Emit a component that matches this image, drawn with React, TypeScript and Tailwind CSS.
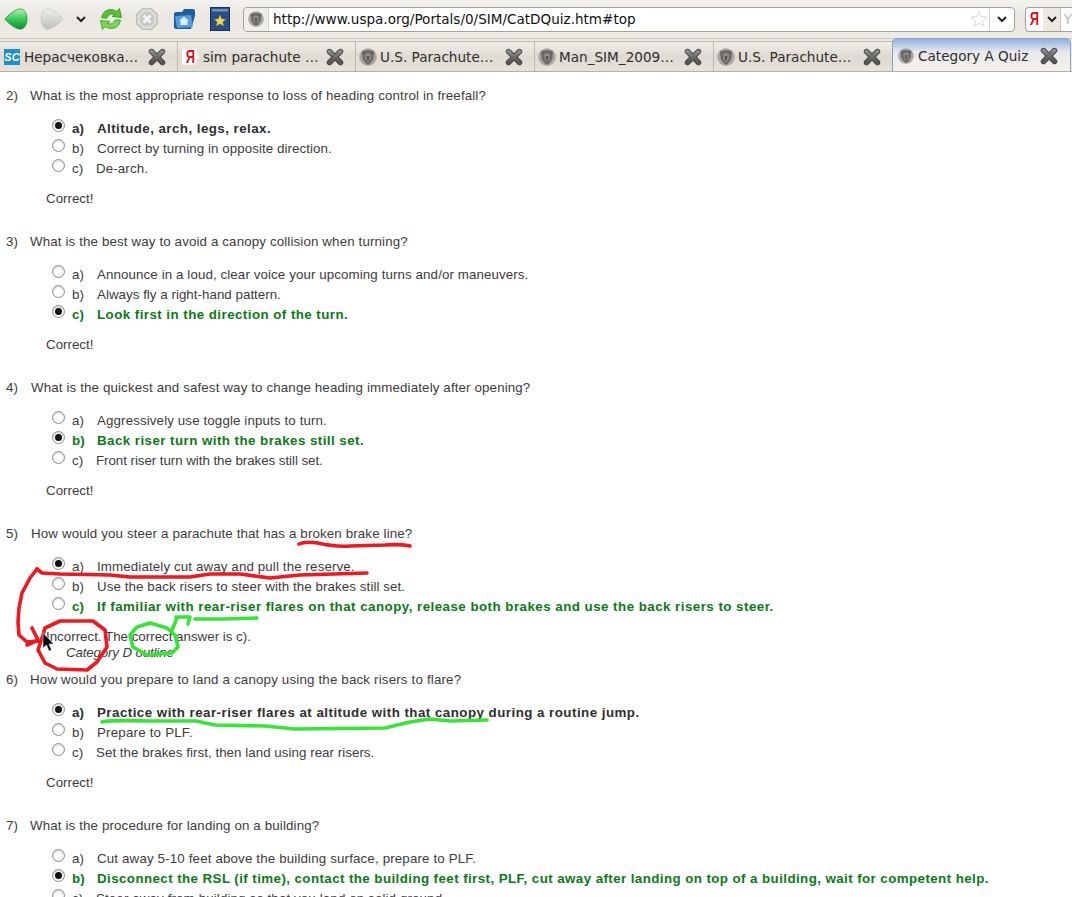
import React from "react";

const Fav = ({ big }: { big?: boolean }) => (
  <svg viewBox="0 0 16 16" className={big ? "w-[18px] h-[18px] -mx-[1px] shrink-0" : "w-[16px] h-[16px] shrink-0"}>
    <circle cx="8" cy="8" r="7.8" fill="#aaa6a2" />
    <path d="M2.6 3.2 Q8 .6 13.4 3.2 L12.8 9.2 Q11.2 13.4 8 15 Q4.8 13.4 3.2 9.2 Z" fill="#6b6866" />
    <path d="M5.2 5.8 L8 4.2 L10.8 5.8 L10.2 10.2 L8 12.6 L5.8 10.2 Z" fill="#8f8c88" />
    <path d="M6.9 7 L9.1 7 L8.7 11 L7.3 11 Z" fill="#565351" />
  </svg>
);

const CloseX = () => (
  <svg width="18" height="18" viewBox="0 0 18 18" className="shrink-0">
    <defs>
      <linearGradient id="xg" x1="0" y1="0" x2="0" y2="1">
        <stop offset="0" stopColor="#8d8d8d" />
        <stop offset="0.5" stopColor="#6a6a6a" />
        <stop offset="1" stopColor="#565656" />
      </linearGradient>
    </defs>
    <path d="M3.5 3.5 L14.5 14.5 M14.5 3.5 L3.5 14.5" stroke="#3f3f3f" strokeWidth="5.4" strokeLinecap="round" />
    <path d="M3.5 3.5 L14.5 14.5 M14.5 3.5 L3.5 14.5" stroke="url(#xg)" strokeWidth="3.8" strokeLinecap="round" />
  </svg>
);

const Tab = ({ icon, label, active, w }: { icon: React.ReactNode; label: string; active?: boolean; w: string }) => (
  <div
    className={
      active
        ? `${w} -ml-[1px] h-[33px] -mt-[3px] shrink-0 flex items-center pl-[5px] pr-[12px] pt-[1px] gap-[4px] rounded-t-[5px] border border-b-0 border-[#8ea2bd] bg-gradient-to-b from-[#8fb0e4] via-[#e9e9ea] via-40% to-[#f4f2ee]`
        : `${w} h-[30px] shrink-0 flex items-center pl-[4px] pr-[11px] gap-[4px] border-r border-t border-[#bdb8ae] bg-gradient-to-b from-[#f1eee9] via-[#dfdbd3] to-[#e6e2da]`
    }
  >
    {icon}
    <span className="flex-1 pt-[2px] whitespace-nowrap text-[13.6px] text-[#2e2e2e] font-['DejaVu_Sans',sans-serif] overflow-hidden">{label}</span>
    <CloseX />
  </div>
);

const Radio = ({ on }: { on?: boolean }) => (
  <span className="w-[13px] h-[13px] rounded-full border border-[#8b8b8b] bg-white flex items-center justify-center shrink-0 -mt-[7px] shadow-[inset_0_1px_2px_#c8c8c8]">
    {on && <span className="w-[7px] h-[7px] rounded-full bg-[#111]" />}
  </span>
);

type Opt = { l: string; t: string; on?: boolean; good?: boolean; bold?: boolean; tr?: string };

const Option = ({ l, t, on, good, bold, tr }: Opt) => {
  const b = good || bold;
  const color = good ? "text-[#0b7a16]" : bold ? "text-[#2e2e2e]" : "text-[#3c3c3c]";
  const sp = tr ?? (b ? "tracking-[0.45px]" : "tracking-[0.12px]");
  const wid = l === "c" && !b ? "w-[24px]" : "w-[25px]";
  return (
    <div className={`h-[20px] flex items-center pl-[52px] ${color}`}>
      <Radio on={on} />
      <span className={`ml-[7px] shrink-0 ${wid} ${b ? "font-bold" : ""}`}>{l})</span>
      <span className={`whitespace-nowrap ${sp} ${b ? "font-bold" : ""}`}>{t}</span>
    </div>
  );
};

const Question = ({
  n,
  q,
  opts,
  x,
  wrong,
  tq,
}: {
  n: number;
  q: string;
  opts: Opt[];
  x?: boolean;
  wrong?: boolean;
  tq?: string;
}) => (
  <section>
    <div className="h-[20px] flex items-center pl-[6px] text-[#3c3c3c]">
      <span className={x ? "w-[25px]" : "w-[24px]"}>{n})</span>
      <span className={`whitespace-nowrap ${tq ?? "tracking-[0.13px]"}`}>{q}</span>
    </div>
    <div className="mt-[13px]">
      {opts.map((o) => (
        <Option key={o.l} {...o} />
      ))}
    </div>
    {wrong ? (
      <>
        <div className="mt-[10px] h-[20px] flex items-center pl-[46px] text-[#3c3c3c]">Incorrect. The correct answer is c).</div>
        <div className="-mt-[2px] mb-[9px] h-[16px] flex items-center pl-[66px] italic tracking-[-0.15px] text-[#3c3c3c]">Category D outline</div>
      </>
    ) : (
      <div className="mt-[10px] mb-[23px] h-[20px] flex items-center pl-[46px] text-[#3c3c3c]">Correct!</div>
    )}
  </section>
);

const Annotations = () => (
  <svg className="absolute left-0 top-0 pointer-events-none" width="1072" height="897" viewBox="0 0 1072 897" fill="none" strokeLinecap="round" strokeLinejoin="round">
    <g stroke="#f2161e" strokeWidth="3.6" className="blur-[0.4px]">
      <path d="M299 544 Q305 541 318 543 Q335 547 350 546 L385 545 Q400 544 410 546" />
      <path d="M37 569 L42 573 L60 574 L110 575 L130 577 L190 577 L210 574 L240 574 L270 578 L300 575 L367 573" />
      <path d="M37 569 L30 578 L22 593 L19 608 L18 622 L19 635 L27 642 L40 641" />
      <path d="M32 628 L38 640 L27 645" />
      <path d="M45 628 L60 621 L93 621 L105 630 L107 647 L97 662 L87 670 L57 669 L45 663 L38 650 L43 635 L45 628" />
    </g>
    <g stroke="#36e636" strokeWidth="3.6" className="blur-[0.4px]">
      <path d="M130 635 L137 627 L150 623 L167 628 L175 635 L178 647 L172 653 L147 655 L133 647 L130 635" />
      <path d="M172 630 L177 618 M176 617 L190 617 L188 624" />
      <path d="M195 619 L225 619 L257 618" />
      <path d="M102 722 Q110 720 150 721 L196 721 L215 725 L265 726 L295 729 L385 728 L410 722 L430 719 L450 721 L487 720" />
    </g>
    <path d="M43 633 L43 648 L46.5 645 L49 651 L51.5 650 L49 644 L53.5 644 Z" fill="#0c0c14" stroke="#d8d8e0" strokeWidth="0.6" />
  </svg>
);

const Chevron = () => (
  <svg width="12" height="8" viewBox="0 0 12 8" className="shrink-0">
    <path d="M2 2 L6 6 L10 2" stroke="#222" strokeWidth="2" fill="none" />
  </svg>
);

const Ya = () => (
  <span className="w-[17px] h-[16px] shrink-0 flex items-center justify-center bg-white [clip-path:polygon(0_0,75%_0,100%_50%,75%_100%,0_100%)]">
    <span className="inline-block scale-x-[0.72] text-[18px] leading-none font-bold text-[#e01010] font-['Liberation_Sans',sans-serif]">Я</span>
  </span>
);

export default function App() {
  return (
    <div className="relative w-[1072px] h-[897px] overflow-hidden bg-white font-['Liberation_Sans',Arial,sans-serif] text-[13.33px]">
      {/* toolbar */}
      <div className="h-[39px] flex items-center bg-gradient-to-b from-[#f4f2ee] via-[#eae7e1] to-[#efece6] border-b border-[#cfcac0]">
        <svg width="24" height="24" viewBox="0 0 24 24" className="ml-[4px] shrink-0">
          <defs>
            <linearGradient id="bk" x1="0" y1="0" x2="0" y2="1">
              <stop offset="0" stopColor="#b4f0ba" />
              <stop offset="0.55" stopColor="#2fc64e" />
              <stop offset="1" stopColor="#17883a" />
            </linearGradient>
          </defs>
          <path d="M1 12 C3 9 10 3 15 2 C20 1 23 6 23 12 C23 18 20 23 15 22 C10 21 3 15 1 12 Z" fill="url(#bk)" stroke="#1f8a3f" strokeWidth="0.7" />
        </svg>
        <svg width="24" height="24" viewBox="0 0 24 24" className="ml-[12px] shrink-0">
          <defs>
            <linearGradient id="fw" x1="0" y1="0" x2="0" y2="1">
              <stop offset="0" stopColor="#efefeb" />
              <stop offset="1" stopColor="#bfbfb8" />
            </linearGradient>
          </defs>
          <path d="M23 12 C21 9 14 3 9 2 C4 1 1 6 1 12 C1 18 4 23 9 22 C14 21 21 15 23 12 Z" fill="url(#fw)" stroke="#c4c4bc" strokeWidth="0.7" />
        </svg>
        <div className="ml-[11px]">
          <Chevron />
        </div>
        <svg width="24" height="24" viewBox="0 0 24 24" className="ml-[12px] shrink-0">
          <circle cx="12" cy="12" r="10.5" fill="#e8f6df" />
          <path d="M2.5 11 Q4 2.5 12 2.5 Q15 2.5 17.5 4.5 L20.5 1.5 L22.5 10.5 L13 9.5 L15.5 7.5 Q10 5.5 8 11 Z" fill="#56c232" stroke="#3a8f25" strokeWidth="0.8" />
          <path d="M21.5 13 Q20 21.5 12 21.5 Q9 21.5 6.5 19.5 L3.5 22.5 L1.5 13.5 L11 14.5 L8.5 16.5 Q14 18.5 16 13 Z" fill="#7ed453" stroke="#3a8f25" strokeWidth="0.8" />
        </svg>
        <svg width="22" height="22" viewBox="0 0 22 22" className="ml-[13px] shrink-0">
          <path d="M6.5 .8 L15.5 .8 L21.2 6.5 L21.2 15.5 L15.5 21.2 L6.5 21.2 L.8 15.5 L.8 6.5 Z" fill="#dededa" stroke="#b4b4ae" strokeWidth="1.1" strokeLinejoin="round" />
          <circle cx="11" cy="11" r="7.6" fill="#c8c8c4" />
          <path d="M7.5 7.5 L14.5 14.5 M14.5 7.5 L7.5 14.5" stroke="#f4f4f2" strokeWidth="2.8" />
        </svg>
        <svg width="24" height="22" viewBox="0 0 24 22" className="ml-[14px] shrink-0">
          <path d="M2 6 L2 19 Q2 21 4 21 L19 21 L23 8 L23 3 Q23 1 21 1 L12 1 L10 4 L4 4 Q2 4 2 6 Z" fill="#1e5f9e" />
          <path d="M3 8 L19 7 L21 19 L5 20 Z" fill="#5b9bd6" />
          <path d="M12 8.5 L17 13 L15.5 13 L15.5 17 L8.5 17 L8.5 13 L7 13 Z" fill="#d8ecfa" />
        </svg>
        <svg width="20" height="24" viewBox="0 0 20 24" className="ml-[14px] shrink-0">
          <rect x="0.5" y="0.5" width="19" height="23" fill="#274f86" stroke="#15305a" />
          <rect x="2" y="2" width="16" height="2.5" fill="#6f93c0" />
          <path d="M10 8 L11.6 12 L15.6 12.3 L12.6 15 L13.6 19 L10 16.8 L6.4 19 L7.4 15 L4.4 12.3 L8.4 12 Z" fill="#f4d94a" stroke="#b89a1e" strokeWidth="0.5" />
        </svg>
        <div className="ml-[13px] w-[772px] h-[25px] shrink-0 flex items-center bg-white border border-[#a6a196] rounded-[4px]">
          <div className="w-[25px] h-full flex items-center justify-center border-r border-[#d4d0c8] bg-[#f0eeea] rounded-l-[4px] shrink-0">
            <Fav />
          </div>
          <span className="ml-[4px] flex-1 text-[13.55px] text-[#111] font-['DejaVu_Sans',sans-serif] whitespace-nowrap">http://www.uspa.org/Portals/0/SIM/CatDQuiz.htm#top</span>
          <svg width="18" height="18" viewBox="0 0 18 18" className="mr-[1px] shrink-0">
            <path d="M9 1.5 L11.2 6.6 L16.7 7.1 L12.5 10.7 L13.8 16.1 L9 13.3 L4.2 16.1 L5.5 10.7 L1.3 7.1 L6.8 6.6 Z" fill="#fff" stroke="#d8d8d4" strokeWidth="1" />
          </svg>
          <div className="w-[25px] h-full border-l border-[#d4d0c8] flex items-center justify-center shrink-0">
            <Chevron />
          </div>
        </div>
        <div className="ml-[10px] flex-1 h-[25px] flex items-center bg-white border border-r-0 border-[#a6a196] rounded-l-[4px] overflow-hidden">
          <Ya />
          <div className="w-[20px] h-full bg-[#ece9e3] flex items-center justify-center border-r border-[#c8c4bc]">
            <Chevron />
          </div>
          <span className="ml-[2px] text-[14px] text-[#bbb] font-['DejaVu_Sans',sans-serif]">Y</span>
        </div>
      </div>

      {/* tabs */}
      <div className="h-[33px] pt-[2px] flex bg-[#ece9e3] border-b border-[#b5b0a6]">
        <Tab
          w="w-[178px]"
          label="Нерасчековка…"
          icon={
            <span className="w-[16px] h-[16px] shrink-0 bg-[#1c8fd0] text-white italic font-bold text-[11px] leading-[16px] text-center font-['Liberation_Sans',sans-serif]">SC</span>
          }
        />
        <Tab w="w-[178px]" label="sim parachute …" icon={<Ya />} />
        <Tab w="w-[179px]" label="U.S. Parachute…" icon={<Fav big />} />
        <Tab w="w-[179px]" label="Man_SIM_2009…" icon={<Fav big />} />
        <Tab w="w-[179px]" label="U.S. Parachute…" icon={<Fav big />} />
        <Tab w="w-[179px]" active label="Category A Quiz" icon={<Fav />} />
      </div>

      {/* page */}
      <main className="pt-[14px]">
        <Question
          n={2}
          q="What is the most appropriate response to loss of heading control in freefall?"
          opts={[
            { l: "a", t: "Altitude, arch, legs, relax.", on: true, bold: true },
            { l: "b", t: "Correct by turning in opposite direction.", tr: "tracking-[0.07px]" },
            { l: "c", t: "De-arch." },
          ]}
        />
        <Question
          n={3}
          q="What is the best way to avoid a canopy collision when turning?"
          opts={[
            { l: "a", t: "Announce in a loud, clear voice your upcoming turns and/or maneuvers.", tr: "tracking-[0.1px]" },
            { l: "b", t: "Always fly a right-hand pattern.", tr: "tracking-[0.03px]" },
            { l: "c", t: "Look first in the direction of the turn.", on: true, good: true },
          ]}
        />
        <Question
          n={4}
          x
          q="What is the quickest and safest way to change heading immediately after opening?"
          opts={[
            { l: "a", t: "Aggressively use toggle inputs to turn." },
            { l: "b", t: "Back riser turn with the brakes still set.", on: true, good: true },
            { l: "c", t: "Front riser turn with the brakes still set.", tr: "tracking-[-0.05px]" },
          ]}
        />
        <Question
          n={5}
          x
          wrong
          q="How would you steer a parachute that has a broken brake line?"
          opts={[
            { l: "a", t: "Immediately cut away and pull the reserve.", on: true },
            { l: "b", t: "Use the back risers to steer with the brakes still set.", tr: "tracking-[0.08px]" },
            { l: "c", t: "If familiar with rear-riser flares on that canopy, release both brakes and use the back risers to steer.", good: true, tr: "tracking-[0.47px]" },
          ]}
        />
        <Question
          n={6}
          tq="tracking-[0.17px]"
          q="How would you prepare to land a canopy using the back risers to flare?"
          opts={[
            { l: "a", t: "Practice with rear-riser flares at altitude with that canopy during a routine jump.", on: true, bold: true, tr: "tracking-[0.47px]" },
            { l: "b", t: "Prepare to PLF.", tr: "tracking-[0.2px]" },
            { l: "c", t: "Set the brakes first, then land using rear risers.", tr: "tracking-[0.04px]" },
          ]}
        />
        <Question
          n={7}
          q="What is the procedure for landing on a building?"
          opts={[
            { l: "a", t: "Cut away 5-10 feet above the building surface, prepare to PLF.", tr: "tracking-[0.15px]" },
            { l: "b", t: "Disconnect the RSL (if time), contact the building feet first, PLF, cut away after landing on top of a building, wait for competent help.", on: true, good: true, tr: "tracking-[0.42px]" },
            { l: "c", t: "Steer away from building so that you land on solid ground." },
          ]}
        />
      </main>
      <Annotations />
    </div>
  );
}
